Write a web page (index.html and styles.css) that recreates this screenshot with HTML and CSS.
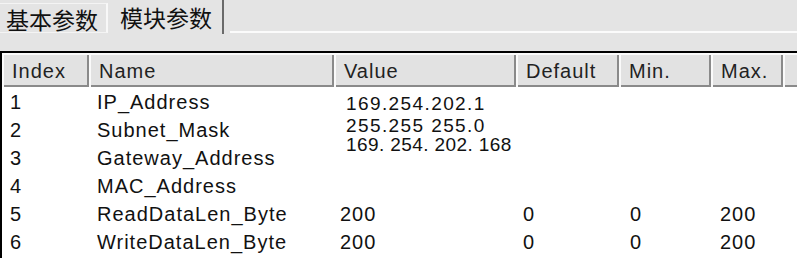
FILE: index.html
```html
<!DOCTYPE html>
<html lang="zh">
<head>
    <meta charset="UTF-8">
    <title>模块参数</title>
    <link rel="stylesheet" href="styles.css">
</head>
<body>

<div class="tabs">
    <div class="tab">基本参数</div>
    <div class="tab tab-active">模块参数</div>
    <div class="tab-rest"></div>
</div>

<div class="panel">
    <table class="params">
        <colgroup>
            <col class="c-index">
            <col class="c-name">
            <col class="c-value">
            <col class="c-default">
            <col class="c-min">
            <col class="c-max">
            <col class="c-extra">
        </colgroup>
        <thead>
            <tr>
                <th>Index</th>
                <th>Name</th>
                <th>Value</th>
                <th>Default</th>
                <th>Min.</th>
                <th>Max.</th>
                <th></th>
            </tr>
        </thead>
        <tbody>
            <tr>
                <td>1</td>
                <td class="name">IP_Address</td>
                <td class="ip-block" rowspan="3">
                    <div>169.254.202.1</div>
                    <div>255.255 255.0</div>
                    <div class="ip-wide">169. 254. 202. 168</div>
                </td>
                <td></td><td></td><td></td><td></td>
            </tr>
            <tr>
                <td>2</td>
                <td class="name">Subnet_Mask</td>
                <td></td><td></td><td></td><td></td>
            </tr>
            <tr>
                <td>3</td>
                <td class="name">Gateway_Address</td>
                <td></td><td></td><td></td><td></td>
            </tr>
            <tr>
                <td>4</td>
                <td class="name">MAC_Address</td>
                <td></td><td></td><td></td><td></td><td></td>
            </tr>
            <tr>
                <td>5</td>
                <td class="name">ReadDataLen_Byte</td>
                <td class="val">200</td>
                <td class="def">0</td>
                <td class="min">0</td>
                <td class="max">200</td>
                <td></td>
            </tr>
            <tr>
                <td>6</td>
                <td class="name">WriteDataLen_Byte</td>
                <td class="val">200</td>
                <td class="def">0</td>
                <td class="min">0</td>
                <td class="max">200</td>
                <td></td>
            </tr>
        </tbody>
    </table>
</div>

</body>
</html>
```

FILE: styles.css
```css
html, body {
    overflow: hidden;
}
body {
    margin: 0;
    height: 258px;
    background-color: #e4e4e4;
    font-family: "Liberation Sans", Arial, sans-serif;
    color: #111;
}
.tabs {
    display: flex;
    height: 34px;
}
.tab {
    font-family: "Noto Sans CJK SC", sans-serif;
    font-size: 23px;
    line-height: 30px;
    padding: 0 6px 0 6px;
    color: #111;
    white-space: nowrap;
}
.tab:first-child {
    width: 94px;
    margin-top: 3px;
    height: 28px;
    border-top: 1px solid #f4f4f4;
    border-right: 2px solid #f8f8f8;
    border-bottom: 1px solid #f4f4f4;
}
.tab-active {
    padding-left: 12px;
    width: 96px;
    line-height: 34px;
    border-right: 2px solid #6a6a6a;
}
.tab-rest {
    flex: 1;
    margin-left: 6px;
    border-bottom: 2px solid #fbfbfb;
    height: 31px;
}
.panel {
    margin-top: 17px;
    border-top: 2px solid #000;
    border-left: 2px solid #000;
    background-color: #fff;
    height: 205px;
    overflow: hidden;
}
.params {
    border-collapse: collapse;
    table-layout: fixed;
    width: 900px;
    font-size: 20px;
    letter-spacing: 1px;
}
.c-index { width: 87px; }
.c-name { width: 245px; }
.c-value { width: 182px; }
.c-default { width: 103px; }
.c-min { width: 92px; }
.c-max { width: 72px; }
.c-extra { width: 119px; }
th {
    height: 32px;
    padding: 2px 0 0 10px;
    text-align: left;
    font-weight: normal;
    color: #222;
    background-color: #e2e2e2;
    box-shadow: inset 2px 2px 0 #fafafa, inset -2px -2px 0 #8a8a8a;
}
td {
    height: 25px;
    padding: 3px 0 0 8px;
    text-align: left;
    vertical-align: middle;
    white-space: nowrap;
}
td.ip-block {
    vertical-align: top;
    padding: 6px 0 0 12px;
    font-size: 19px;
    letter-spacing: 1.4px;
    line-height: 22px;
}
.ip-block .ip-wide {
    margin-top: -3px;
    letter-spacing: 0.4px;
}
td.val { padding-left: 6px; }
td.def { padding-left: 7px; }
td.min { padding-left: 11px; }
td.max { padding-left: 9px; }
```
